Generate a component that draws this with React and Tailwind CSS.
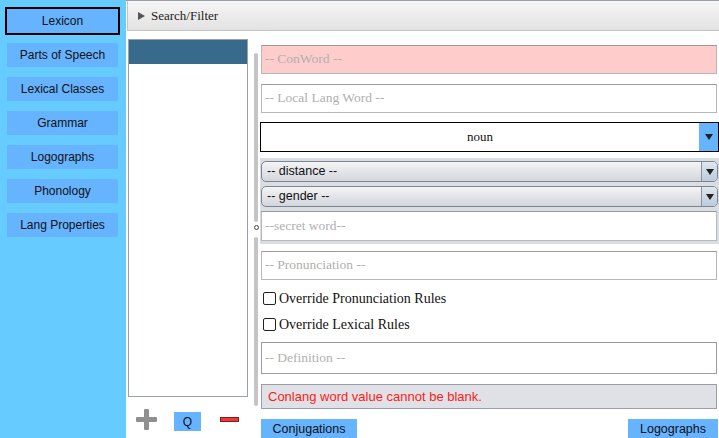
import React from "react";

const sans = "font-['Liberation_Sans',Arial,sans-serif]";
const serif = "font-['Liberation_Serif','DejaVu_Serif',serif]";

function NavBtn({ label, active }) {
  return (
    <div className={`w-[115px] h-[28px] border-2 ${active ? "border-black" : "border-transparent"}`}>
      <div className={`h-full bg-[#66b3ff] flex items-center justify-center text-[12px] text-[#111] ${sans}`}>{label}</div>
    </div>
  );
}

function Field({ placeholder, className = "", bg = "bg-white", border = "border-[#b8b8b8]" }) {
  return (
    <div className={`shrink-0 w-[456px] ml-[1px] border ${border} border-t-[#999] ${bg} flex items-center px-[3px] ${className}`}>
      <span className={`text-[13.5px] text-[#b0b0b0] ${serif}`}>{placeholder}</span>
    </div>
  );
}

function Combo({ label, className = "" }) {
  return (
    <div className={`shrink-0 w-[457px] h-[21px] ml-[1px] rounded-[5px] border border-[#7d8591] bg-gradient-to-b from-[#f3f4f6] to-[#d3d6dc] flex items-center overflow-hidden ${className}`}>
      <span className={`flex-1 pl-[5px] text-[12.5px] text-[#111] ${sans}`}>{label}</span>
      <div className="w-[16px] h-full border-l border-[#8a929e] bg-gradient-to-b from-[#dfe6ee] to-[#bccbda] flex items-center justify-center">
        <svg width="8" height="6" viewBox="0 0 8 6"><path d="M0 0h8L4 6z" fill="#222" /></svg>
      </div>
    </div>
  );
}

function Check({ label, className = "" }) {
  return (
    <div className={`shrink-0 h-[13px] flex items-center ml-[3px] ${className}`}>
      <div className="w-[13px] h-[13px] border border-[#222] rounded-[2px] bg-white" />
      <span className={`ml-[3px] text-[14px] leading-[13px] text-[#111] ${serif}`}>{label}</span>
    </div>
  );
}

export default function App() {
  return (
    <div className="w-[719px] h-[438px] flex overflow-hidden bg-white">
      <div className="w-[126px] h-full shrink-0 bg-[#66ccff] flex flex-col gap-[6px] pt-[7px] pl-[5px]">
        <NavBtn label="Lexicon" active />
        <NavBtn label="Parts of Speech" />
        <NavBtn label="Lexical Classes" />
        <NavBtn label="Grammar" />
        <NavBtn label="Logographs" />
        <NavBtn label="Phonology" />
        <NavBtn label="Lang Properties" />
      </div>
      <div className="flex-1 min-h-0 flex flex-col border-t border-[#9aa0aa]">
        <div className="shrink-0 h-[30px] ml-[1px] border-b border-l border-[#c4c4c4] bg-gradient-to-b from-[#f6f6f6] to-[#e2e2e2] flex items-center pl-[10px]">
          <svg width="7" height="8" viewBox="0 0 7 8"><path d="M0 0L7 4L0 8z" fill="#555" /></svg>
          <span className={`ml-[6px] text-[13px] text-[#222] ${serif}`}>Search/Filter</span>
        </div>
        <div className="flex-1 min-h-0 flex">
          <div className="w-[120px] ml-[2px] flex flex-col">
            <div className="shrink-0 mt-[8px] h-[358px] border border-[#9aa0aa] bg-white">
              <div className="h-[24px] bg-[#386a8c]" />
            </div>
            <div className="shrink-0 flex items-center mt-[12px] h-[21px]">
              <svg className="ml-[8px]" width="21" height="21" viewBox="0 0 21 21">
                <rect x="8" y="0" width="5" height="21" rx="1" fill="#909090" />
                <rect x="0" y="8" width="21" height="5" rx="1" fill="#909090" />
              </svg>
              <div className={`ml-[17px] mt-[4px] w-[27px] h-[19px] bg-[#66b3ff] flex items-center justify-center text-[12px] text-[#111] ${sans}`}>Q</div>
              <div className="ml-[19px] w-[19px] h-[5px] bg-[#e83a3a] border border-[#8a1a1a]" />
            </div>
          </div>
          <div className="w-[12px] flex flex-col items-center pl-[4px]">
            <div className="shrink-0 mt-[22px] w-[4px] h-[169px] bg-[#c4c4c4] rounded-full" />
            <div className="shrink-0 mt-[3px] w-[5px] h-[5px] rounded-full border border-[#444]" />
            <div className="shrink-0 mt-[7px] w-[4px] h-[169px] bg-[#c4c4c4] rounded-full" />
          </div>
          <div className="flex-1 flex flex-col">
            <Field placeholder="-- ConWord --" className="mt-[14px] h-[29px]" bg="bg-[#ffcccc]" />
            <Field placeholder="-- Local Lang Word --" className="mt-[10px] h-[29px]" />
            <div className="shrink-0 mt-[9px] h-[30px] border border-black flex">
              <div className={`flex-1 flex items-center justify-center text-[13px] text-[#111] ${serif}`}>noun</div>
              <div className="w-[19px] bg-[#66b3ff] flex items-center justify-center">
                <svg width="8" height="6" viewBox="0 0 8 6"><path d="M0 0h8L4 6z" fill="#222" /></svg>
              </div>
            </div>
            <div className="shrink-0 mt-[6px] bg-[#dadde2] pt-[3px] pb-[3px] flex flex-col">
              <Combo label="-- distance --" />
              <Combo label="-- gender --" className="mt-[4px]" />
              <Field placeholder="--secret word--" className="mt-[4px] h-[30px]" />
            </div>
            <Field placeholder="-- Pronunciation --" className="mt-[7px] h-[29px]" />
            <Check label="Override Pronunciation Rules" className="mt-[12px]" />
            <Check label="Override Lexical Rules" className="mt-[13px]" />
            <Field placeholder="-- Definition --" className="mt-[11px] h-[32px]" border="border-[#999ea8]" />
            <div className={`shrink-0 mt-[10px] w-[456px] ml-[1px] h-[25px] border border-[#999ea8] bg-[#dfe1e6] flex items-center px-[6px] text-[13px] text-[#ff1a1a] ${sans}`}>
              Conlang word value cannot be blank.
            </div>
            <div className="shrink-0 mt-[10px] flex justify-between w-[457px] ml-[1px]">
              <div className={`w-[96px] h-[20px] bg-[#66b3ff] flex items-center justify-center text-[12.5px] text-[#111] ${sans}`}>Conjugations</div>
              <div className={`w-[90px] h-[20px] bg-[#66b3ff] flex items-center justify-center text-[12.5px] text-[#111] ${sans}`}>Logographs</div>
            </div>
          </div>
        </div>
      </div>
    </div>
  );
}
